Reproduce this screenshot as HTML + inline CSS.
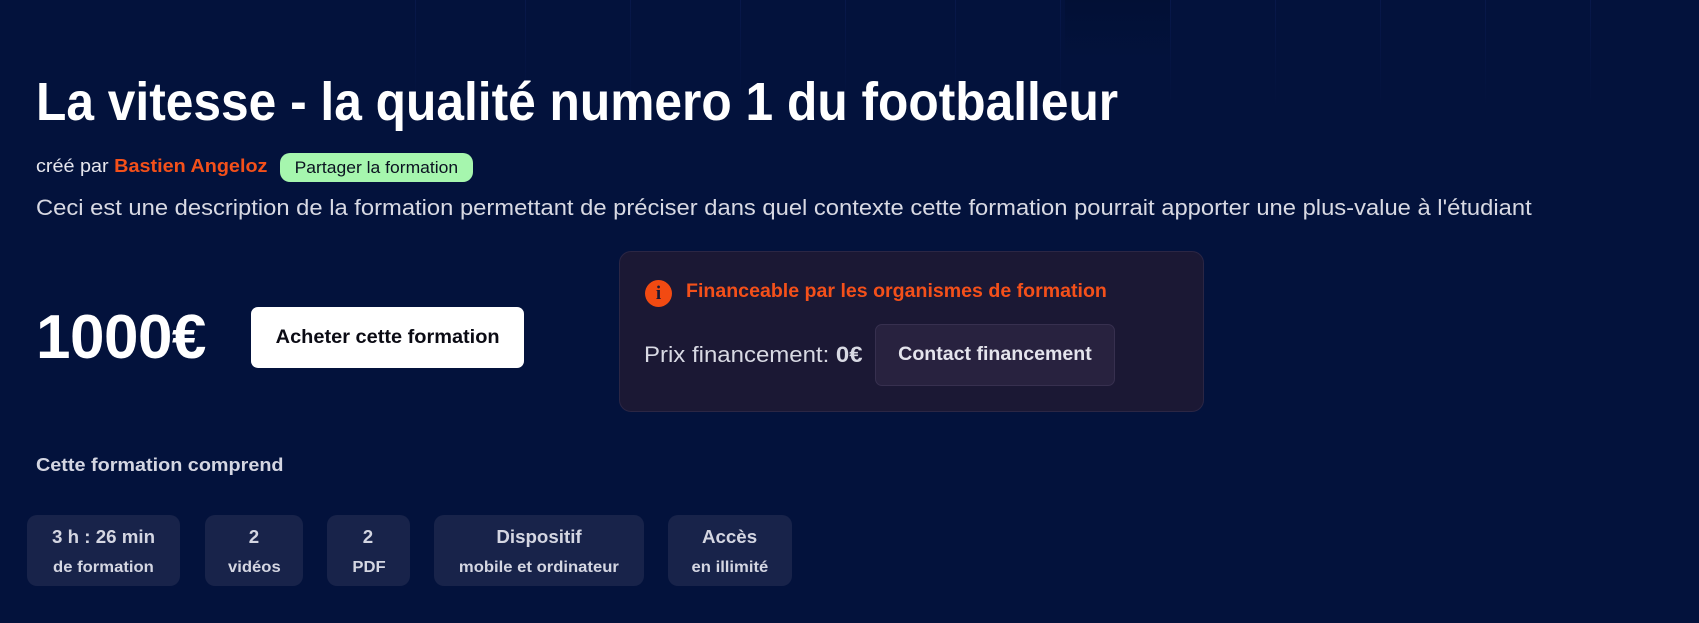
<!DOCTYPE html>
<html><head><meta charset="utf-8"><style>
*{margin:0;padding:0;box-sizing:border-box}
body{width:1699px;height:623px;background:#03123c;font-family:"Liberation Sans",sans-serif;position:relative;overflow:hidden;color:#fff}
.a{position:absolute;white-space:nowrap}
.sq{transform-origin:0 50%;display:inline-block}
.card{position:absolute;top:515px;height:71px;background:#18234a;border-radius:10px;text-align:center;color:#d4d6e2;font-weight:bold}
.card .l1{position:absolute;left:0;right:0;top:12px;font-size:18px}
.card .l2{position:absolute;left:0;right:0;top:44px;font-size:16px}
.card .l2 span,.card .l1 span{display:inline-block;transform:scaleX(1.04)}
.grid{position:absolute;top:0;width:1px;height:110px;background:linear-gradient(#08184a,rgba(3,18,60,0))}
</style></head><body>
<div class="grid" style="left:415px"></div><div class="grid" style="left:525px"></div><div class="grid" style="left:630px"></div><div class="grid" style="left:740px"></div><div class="grid" style="left:845px"></div><div class="grid" style="left:955px"></div><div class="grid" style="left:1060px"></div><div class="grid" style="left:1170px"></div><div class="grid" style="left:1275px"></div><div class="grid" style="left:1380px"></div><div class="grid" style="left:1485px"></div><div class="grid" style="left:1590px"></div>
<div style="position:absolute;left:1065px;top:0;width:105px;height:60px;background:linear-gradient(#021035,#03123c)"></div>

<div class="a" style="left:36px;top:72px;font-size:54px;font-weight:bold;line-height:60px"><span class="sq" style="transform:scaleX(0.92)">La vitesse - la qualité numero 1 du footballeur</span></div>

<div class="a" style="left:36px;top:156px;font-size:18px;line-height:20px;color:#e6e6ee"><span class="sq" style="transform:scaleX(1.1)">créé par <b style="color:#f4501a">Bastien Angeloz</b></span></div>
<div class="a" style="left:280px;top:153px;width:193px;height:29px;background:#a6f6ae;border-radius:10px;color:#0b1220;font-size:17px;line-height:29px;text-align:center"><span class="sq" style="transform:scaleX(1.03);transform-origin:50% 50%">Partager la formation</span></div>

<div class="a" style="left:36px;top:196px;font-size:22px;line-height:24px;color:#d8d9e3"><span class="sq" style="transform:scaleX(1.08)">Ceci est une description de la formation permettant de préciser dans quel contexte cette formation pourrait apporter une plus-value à l'étudiant</span></div>

<div class="a" style="left:36px;top:308px;font-size:62px;font-weight:bold;line-height:60px;letter-spacing:-0.5px">1000€</div>
<div class="a" style="left:251px;top:307px;width:273px;height:61px;background:#fff;border-radius:7px;color:#0b0b14;font-size:19px;font-weight:bold;line-height:61px;text-align:center"><span class="sq" style="transform:scaleX(1.05);transform-origin:50% 50%">Acheter cette formation</span></div>

<div class="a" style="left:619px;top:251px;width:585px;height:161px;background:#1b1834;border:1px solid #2b2644;border-radius:12px"></div>
<div class="a" style="left:645px;top:280px;width:27px;height:27px;border-radius:50%;background:#f24a12;color:#1b1834;font-family:'Liberation Serif',serif;font-weight:bold;font-size:19px;line-height:27px;text-align:center">i</div>
<div class="a" style="left:686px;top:281px;font-size:19px;font-weight:bold;color:#f4501a;line-height:22px"><span class="sq" style="transform:scaleX(1.03)">Financeable par les organismes de formation</span></div>
<div class="a" style="left:644px;top:342px;font-size:22px;color:#d8d9e3;line-height:26px"><span class="sq" style="transform:scaleX(1.09)">Prix financement: <b>0€</b></span></div>
<div class="a" style="left:875px;top:324px;width:240px;height:62px;background:#28223f;border:1px solid #37304f;border-radius:7px;color:#e4e4ec;font-size:19px;font-weight:bold;line-height:60px;text-align:center"><span class="sq" style="transform:scaleX(1.03);transform-origin:50% 50%">Contact financement</span></div>

<div class="a" style="left:36px;top:454px;font-size:18px;font-weight:bold;color:#d4d6e2;line-height:22px"><span class="sq" style="transform:scaleX(1.1)">Cette formation comprend</span></div>

<div class="card" style="left:27px;width:153px"><div class="l1"><span>3 h : 26 min</span></div><div class="l2"><span>de formation</span></div></div>
<div class="card" style="left:205px;width:98px"><div class="l1"><span>2</span></div><div class="l2"><span>vidéos</span></div></div>
<div class="card" style="left:327px;width:83px"><div class="l1"><span>2</span></div><div class="l2"><span>PDF</span></div></div>
<div class="card" style="left:434px;width:210px"><div class="l1"><span>Dispositif</span></div><div class="l2"><span>mobile et ordinateur</span></div></div>
<div class="card" style="left:668px;width:124px"><div class="l1"><span>Accès</span></div><div class="l2"><span>en illimité</span></div></div>
</body></html>
